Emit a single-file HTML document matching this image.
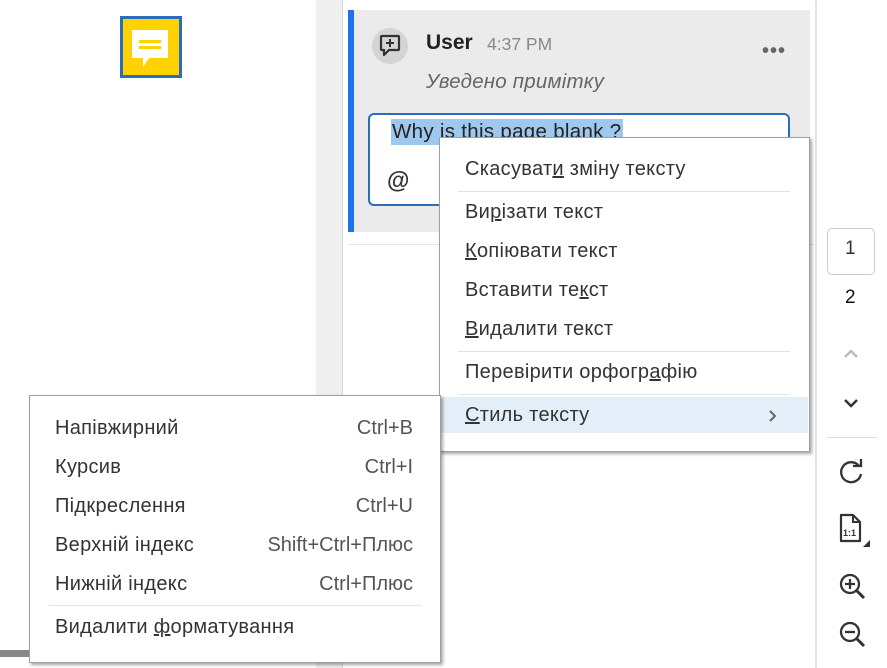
<!DOCTYPE html>
<html><head><meta charset="utf-8"><style>
*{margin:0;padding:0;box-sizing:border-box}
body{width:887px;height:668px;overflow:hidden;background:#fff;font-family:"Liberation Sans",Arial,sans-serif;position:relative;color:#333}
.a{position:absolute}
.menu{position:absolute;background:#fff;border:1px solid #a0a0a0;box-shadow:2px 2px 3px rgba(0,0,0,.35)}
.it{position:absolute;font-size:20px;letter-spacing:0.3px;color:#333;white-space:nowrap}
.sc{position:absolute;font-size:20px;color:#555;white-space:nowrap;text-align:right}
.sep{position:absolute;height:1px;background:#e4e4e4}
u{text-decoration:underline}
</style></head><body>
<div class="a" style="left:316px;top:0;width:26px;height:668px;background:#efefef"></div>
<div class="a" style="left:342px;top:0;width:1px;height:668px;background:#d8d8d8"></div>
<div class="a" style="left:0;top:650px;width:30px;height:7px;background:#888"></div>
<div class="a" style="left:120px;top:16px;width:62px;height:62px;background:#2a6ebb"></div>
<div class="a" style="left:123px;top:19px;width:56px;height:56px;background:#ffd200"></div>
<svg class="a" style="left:131px;top:29px" width="38" height="40" viewBox="0 0 38 40"><path d="M1 1H37V29H18L12 38V29H1Z" fill="#fff"/><rect x="8" y="11" width="22" height="3" fill="#ffd200"/><rect x="8" y="17" width="22" height="3" fill="#ffd200"/></svg>
<div class="a" style="left:348px;top:10px;width:462px;height:222px;background:#ebebeb"></div>
<div class="a" style="left:348px;top:10px;width:6px;height:222px;background:#1a73e8"></div>
<div class="a" style="left:348px;top:244px;width:467px;height:1px;background:#e6e6e6"></div>
<div class="a" style="left:815px;top:0;width:2px;height:668px;background:#e2e2e2"></div>
<div class="a" style="left:372px;top:28px;width:36px;height:36px;border-radius:50%;background:#d4d4d4"></div>
<svg class="a" style="left:379px;top:34px" width="22" height="24" viewBox="0 0 22 24"><path d="M3 2H19Q20 2 20 3V15Q20 16 19 16H10L5 21V16H3Q2 16 2 15V3Q2 2 3 2Z" fill="none" stroke="#333" stroke-width="2.2" stroke-linejoin="round"/><path d="M11 5V13M7 9H15" stroke="#333" stroke-width="2"/></svg>
<div class="a" style="left:426px;top:31px;font-size:21px;font-weight:bold;color:#222">User</div>
<div class="a" style="left:487px;top:34px;font-size:17.5px;color:#888">4:37 PM</div>
<div class="a" style="left:762px;top:40px;font-size:20px;color:#666;letter-spacing:1px;font-weight:bold">•••</div>
<div class="a" style="left:426px;top:70px;font-size:20.5px;font-style:italic;color:#666;letter-spacing:0.2px">Уведено примітку</div>
<div class="a" style="left:368px;top:113px;width:422px;height:93px;background:#fff;border:2px solid #2a6ebb;border-radius:6px"></div>
<div class="a" style="left:391px;top:119px;height:26px;background:#9ec8ee;font-size:20.5px;color:#222;padding:2px 2px 0 1px;line-height:22px;letter-spacing:0.3px">Why is this page blank ?</div>
<div class="a" style="left:387px;top:167px;font-size:23px;font-weight:bold;color:#333">@</div>
<div class="a" style="left:827px;top:228px;width:48px;height:47px;border:1px solid #ccc;border-radius:5px"></div>
<div class="a" style="left:845px;top:238px;font-size:19px;color:#333">1</div>
<div class="a" style="left:845px;top:287px;font-size:19px;color:#111">2</div>
<svg class="a" style="left:842px;top:348px" width="18" height="12"><path d="M3 9L9 3L15 9" fill="none" stroke="#bbb" stroke-width="2.5"/></svg>
<svg class="a" style="left:842px;top:397px" width="18" height="12"><path d="M3 3L9 9L15 3" fill="none" stroke="#333" stroke-width="2.5"/></svg>
<div class="a" style="left:827px;top:437px;width:50px;height:1px;background:#ddd"></div>
<svg class="a" style="left:838px;top:458px" width="28" height="28" viewBox="0 0 28 28"><path d="M21 8A10 10 0 1 0 23 16" fill="none" stroke="#333" stroke-width="2.3"/><path d="M15 8H23V1" fill="none" stroke="#333" stroke-width="2.3"/></svg>
<svg class="a" style="left:838px;top:512px" width="34" height="38" viewBox="0 0 34 38"><path d="M3 3H15L22 10V29H3Z" fill="none" stroke="#333" stroke-width="2.2" stroke-linejoin="round"/><path d="M15 3V10H22" fill="none" stroke="#333" stroke-width="2"/><text x="5" y="24" font-size="9" font-family="Liberation Sans" fill="#333" font-weight="bold">1:1</text><path d="M25 35L32 28V35Z" fill="#333"/></svg>
<svg class="a" style="left:838px;top:572px" width="30" height="30" viewBox="0 0 30 30"><circle cx="12" cy="12" r="9" fill="none" stroke="#333" stroke-width="2.3"/><path d="M18.5 18.5L26 26" stroke="#333" stroke-width="3"/><path d="M12 7V17M7 12H17" stroke="#333" stroke-width="2.3"/></svg>
<svg class="a" style="left:838px;top:620px" width="30" height="30" viewBox="0 0 30 30"><circle cx="12" cy="12" r="9" fill="none" stroke="#333" stroke-width="2.3"/><path d="M18.5 18.5L26 26" stroke="#333" stroke-width="3"/><path d="M7 12H17" stroke="#333" stroke-width="2.3"/></svg>
<div class="menu" style="left:439px;top:137px;width:371px;height:315px">
<div class="it" style="left:25px;top:20px">Скасуват<u>и</u> зміну тексту</div>
<div class="sep" style="left:18px;top:53px;width:332px"></div>
<div class="it" style="left:25px;top:63px">Ви<u>р</u>ізати текст</div>
<div class="it" style="left:25px;top:102px"><u>К</u>опіювати текст</div>
<div class="it" style="left:25px;top:141px">Вставити те<u>к</u>ст</div>
<div class="it" style="left:25px;top:180px"><u>В</u>идалити текст</div>
<div class="sep" style="left:18px;top:213px;width:332px"></div>
<div class="it" style="left:25px;top:223px">Перевірити орфогр<u>а</u>фію</div>
<div class="sep" style="left:18px;top:256px;width:332px"></div>
<div class="a" style="left:0;top:259px;width:368px;height:36px;background:#e4eef8"></div>
<div class="it" style="left:25px;top:266px"><u>С</u>тиль тексту</div>
<svg class="a" style="left:328px;top:271px" width="10" height="14"><path d="M2 2L7 7L2 12" fill="none" stroke="#666" stroke-width="2"/></svg>
</div>
<div class="menu" style="left:29px;top:395px;width:412px;height:268px">
<div class="it" style="left:25px;top:21px">Напівжирний</div><div class="sc" style="right:27px;top:21px">Ctrl+B</div>
<div class="it" style="left:25px;top:60px">Курсив</div><div class="sc" style="right:27px;top:60px">Ctrl+I</div>
<div class="it" style="left:25px;top:99px">Підкреслення</div><div class="sc" style="right:27px;top:99px">Ctrl+U</div>
<div class="it" style="left:25px;top:138px">Верхній індекс</div><div class="sc" style="right:27px;top:138px">Shift+Ctrl+Плюс</div>
<div class="it" style="left:25px;top:177px">Нижній індекс</div><div class="sc" style="right:27px;top:177px">Ctrl+Плюс</div>
<div class="sep" style="left:19px;top:209px;width:373px"></div>
<div class="it" style="left:25px;top:220px">Видалити <u>ф</u>орматування</div>
</div>
</body></html>
